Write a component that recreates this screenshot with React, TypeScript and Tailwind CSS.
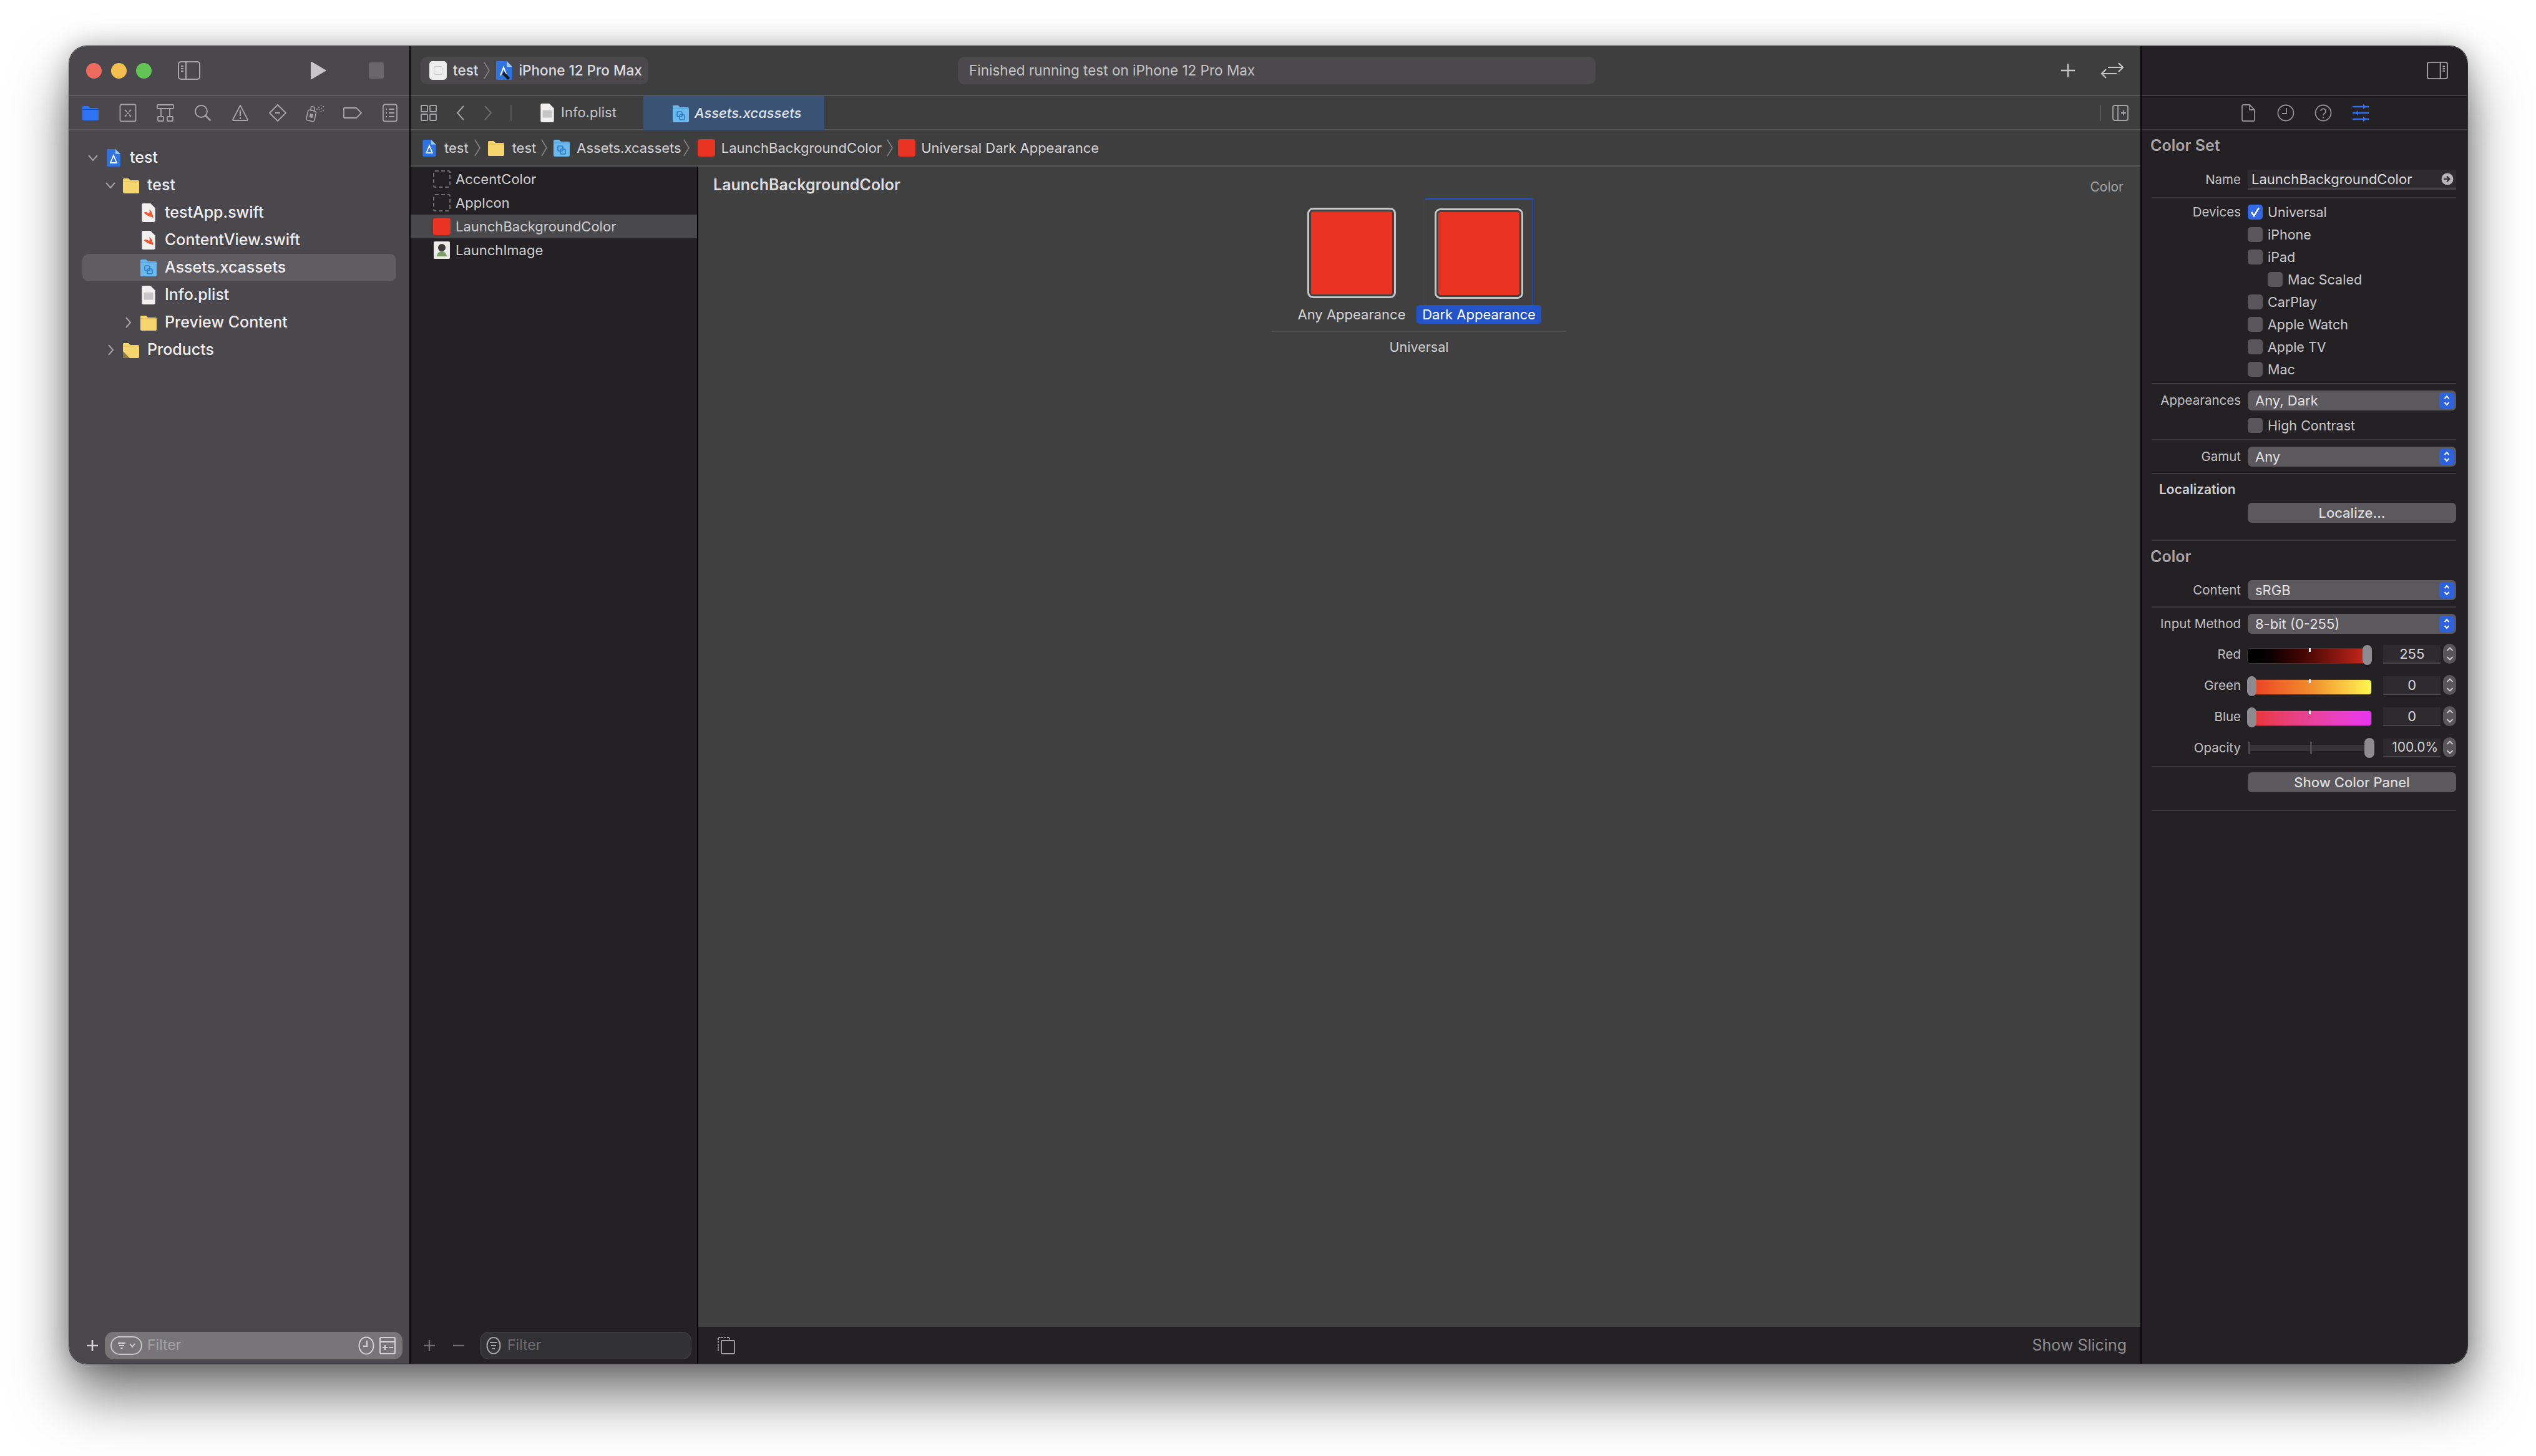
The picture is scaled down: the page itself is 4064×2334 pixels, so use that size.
import React from "react";

const ui = { fontFamily: "Inter, 'Liberation Sans', sans-serif" };

const Chevron = ({ className = "" }: { className?: string }) => (
  <svg viewBox="0 0 12 30" className={`w-[12px] h-[30px] shrink-0 ${className}`} fill="none" stroke="#858386" strokeWidth="1.6">
    <path d="M2 2l8 13-8 13" />
  </svg>
);

const Disclosure = ({ open }: { open: boolean }) => (
  <svg viewBox="0 0 20 20" className="w-[20px] h-[20px]" fill="none" stroke="#a5a3a7" strokeWidth="2">
    {open ? <path d="M3 6l7 8 7-8" /> : <path d="M7 2l7 8-7 8" />}
  </svg>
);

const FolderIcon = ({ size = "w-[28px] h-[28px]", badge = false }: { size?: string; badge?: boolean }) => (
  <svg viewBox="0 0 28 28" className={size}>
    <path d="M1 5a2 2 0 012-2h7l3 3h12a2 2 0 012 2v17a2 2 0 01-2 2H3a2 2 0 01-2-2z" fill="#f6d56f" />
    <path d="M1 8h26" stroke="#e0ba4e" strokeWidth="1" />
    {badge && <path d="M1 16l11 11H3a2 2 0 01-2-2z" fill="#8c7a3c" />}
  </svg>
);

const ProjectIcon = ({ size = "w-[24px] h-[30px]" }: { size?: string }) => (
  <svg viewBox="0 0 24 30" className={size}>
    <path d="M1 3a2 2 0 012-2h12l8 8v18a2 2 0 01-2 2H3a2 2 0 01-2-2z" fill="#2f73e0" />
    <path d="M15 1l8 8h-8z" fill="#9cc7f5" />
    <path d="M7 23l5-12 5 12M6 23h12" stroke="#fff" strokeWidth="1.8" fill="none" />
  </svg>
);

const SwiftIcon = () => (
  <svg viewBox="0 0 24 30" className="w-[26px] h-[32px]">
    <path d="M2 3a2 2 0 012-2h11l7 7v19a2 2 0 01-2 2H4a2 2 0 01-2-2z" fill="#f2f1f0" />
    <path d="M5 15c4 4 8 6 11 6 1 0 2 1 3 2 0-2 0-4-1-5 0-3-2-6-5-8 1 3 1 5 0 6-2-1-5-3-8-1z" fill="#ee5b36" />
  </svg>
);

const PlistIcon = ({ size = "w-[26px] h-[32px]" }: { size?: string }) => (
  <svg viewBox="0 0 24 30" className={size}>
    <path d="M2 3a2 2 0 012-2h11l7 7v19a2 2 0 01-2 2H4a2 2 0 01-2-2z" fill="#f2f1f0" />
    <rect x="5" y="11" width="14" height="11" rx="1" fill="#c6c5c7" />
  </svg>
);

const AssetsIcon = ({ size = "w-[28px] h-[30px]" }: { size?: string }) => (
  <svg viewBox="0 0 28 30" className={size}>
    <path d="M1 4a2 2 0 012-2h7l3 3h12a2 2 0 012 2v20a2 2 0 01-2 2H3a2 2 0 01-2-2z" fill="#6bb9ef" />
    <path d="M1 7h26" stroke="#4a9bd8" strokeWidth="1" />
    <rect x="8" y="12" width="8" height="8" rx="1.5" fill="none" stroke="#2c79c4" strokeWidth="1.6" />
    <rect x="12" y="17" width="8" height="8" rx="1.5" fill="none" stroke="#2c79c4" strokeWidth="1.6" />
  </svg>
);

const Red = ({ className = "w-[28px] h-[28px]" }: { className?: string }) => (
  <div className={`bg-[#e93323] rounded-[4px] shrink-0 ${className}`} />
);

const navIcon = "w-[30px] h-[30px]";
const NavIcons = [
  <svg viewBox="0 0 30 30" className={navIcon} key="a">
    <path d="M2 6a2 2 0 012-2h7l3 3h12a2 2 0 012 2v16a2 2 0 01-2 2H4a2 2 0 01-2-2z" fill="#2f74f5" />
    <path d="M2 9.5h26" stroke="#48464a" strokeWidth="1" />
  </svg>,
  <svg viewBox="0 0 30 30" className={navIcon} fill="none" stroke="#a5a3a7" strokeWidth="1.8" key="b">
    <rect x="2.5" y="1.5" width="25" height="27" rx="2" />
    <path d="M10 10l3 3M20 10l-3 3M10 21l3-3M20 21l-3-3" />
    <circle cx="15" cy="15.5" r="1.6" fill="#a5a3a7" stroke="none" />
  </svg>,
  <svg viewBox="0 0 30 30" className={navIcon} fill="none" stroke="#a5a3a7" strokeWidth="1.8" key="c">
    <rect x="2" y="2" width="26" height="6" rx="1" />
    <path d="M8 8v12M22 8v12" />
    <rect x="3" y="21" width="9" height="7" rx="1" />
    <rect x="18" y="21" width="9" height="7" rx="1" />
  </svg>,
  <svg viewBox="0 0 30 30" className={navIcon} fill="none" stroke="#a5a3a7" strokeWidth="2" key="d">
    <circle cx="12.5" cy="12.5" r="9.5" />
    <path d="M19.5 19.5l8 8" strokeWidth="2.6" />
  </svg>,
  <svg viewBox="0 0 30 30" className={navIcon} fill="none" stroke="#a5a3a7" strokeWidth="1.8" key="e">
    <path d="M15 3L3 26a1 1 0 001 1h22a1 1 0 001-1z" strokeLinejoin="round" />
    <path d="M15 11v9" strokeWidth="2.2" />
    <circle cx="15" cy="23.5" r="1.3" fill="#a5a3a7" stroke="none" />
  </svg>,
  <svg viewBox="0 0 30 30" className={navIcon} fill="none" stroke="#a5a3a7" strokeWidth="1.8" key="f">
    <path d="M15 2l13 13-13 13L2 15z" strokeLinejoin="round" />
    <path d="M11 15h8" strokeWidth="2.2" />
  </svg>,
  <svg viewBox="0 0 30 30" className={navIcon} fill="#a5a3a7" stroke="#a5a3a7" strokeWidth="1.6" key="g">
    <g transform="rotate(12 9 18)" >
      <rect x="2.5" y="11" width="13" height="17" rx="2.5" fill="none" />
      <rect x="6" y="5" width="6" height="6" rx="1" fill="none" />
      <rect x="6.5" y="16.5" width="5" height="6" stroke="none" />
    </g>
    <g stroke="none">
      <circle cx="18" cy="9" r="1" /><circle cx="21" cy="6" r="1" /><circle cx="24.500" cy="3" r="1" />
      <circle cx="21.500" cy="10" r="1" /><circle cx="25" cy="7.500" r="1" /><circle cx="28.500" cy="5" r="1" />
      <circle cx="24.500" cy="13" r="1" /><circle cx="28" cy="11" r="1" />
    </g>
  </svg>,
  <svg viewBox="0 0 30 30" className={navIcon} fill="none" stroke="#a5a3a7" strokeWidth="1.8" key="h">
    <path d="M1 8a1 1 0 011-1h19l8 8-8 8H2a1 1 0 01-1-1z" strokeLinejoin="round" />
  </svg>,
  <svg viewBox="0 0 30 30" className={navIcon} fill="none" stroke="#a5a3a7" strokeWidth="1.8" key="i">
    <rect x="4" y="1.5" width="22" height="27" rx="3" />
    <path d="M8 9h2M13 9h9M8 15h2M13 15h9M8 21h2M13 21h9" />
  </svg>,
];

const tree = [
  { name: "test", pad: "pl-[7px]", open: true, icon: <ProjectIcon /> },
  { name: "test", pad: "pl-[35px]", open: true, icon: <FolderIcon /> },
  { name: "testApp.swift", pad: "pl-[63px]", icon: <SwiftIcon /> },
  { name: "ContentView.swift", pad: "pl-[63px]", icon: <SwiftIcon /> },
  { name: "Assets.xcassets", pad: "pl-[63px]", icon: <AssetsIcon />, selected: true },
  { name: "Info.plist", pad: "pl-[63px]", icon: <PlistIcon /> },
  { name: "Preview Content", pad: "pl-[63px]", open: false, icon: <FolderIcon /> },
  { name: "Products", pad: "pl-[35px]", open: false, icon: <FolderIcon badge /> },
];

const Divider = ({ className = "" }: { className?: string }) => <div className={`h-[2px] bg-[#3d3b3f] ${className}`} />;

const Label = ({ children }: { children?: React.ReactNode }) => (
  <div className="w-[143px] mr-[11px] text-right text-[20.500px] text-[#c2c1c3] shrink-0 whitespace-nowrap">{children}</div>
);

const Popup = ({ label, value }: { label: string; value: string }) => (
  <div className="flex items-center h-[32px]">
    <Label>{label}</Label>
    <div className="flex-1 h-[32px] rounded-[7px] bg-[#5b595d] flex items-center justify-between pl-[12px] pr-[3px] text-[22px] text-[#e2e1e3]">
      <span>{value}</span>
      <div className="w-[24px] h-[27px] rounded-[6px] bg-[#2d62dc] flex items-center justify-center">
        <svg viewBox="0 0 12 20" className="w-[12px] h-[20px]" fill="none" stroke="#fff" strokeWidth="2">
          <path d="M2.5 7L6 3l3.500 4M2.500 13L6 17l3.500-4" />
        </svg>
      </div>
    </div>
  </div>
);

const Check = ({ label, checked, indent }: { label: string; checked?: boolean; indent?: boolean }) => (
  <div className={`flex items-center h-[36px] ${indent ? "pl-[32px]" : ""}`}>
    <div className={`w-[24px] h-[24px] rounded-[5px] flex items-center justify-center ${checked ? "bg-[#3369e7]" : "bg-[#58565a]"}`}>
      {checked && (
        <svg viewBox="0 0 20 20" className="w-[20px] h-[20px]" fill="none" stroke="#fff" strokeWidth="2.6">
          <path d="M4 10l4 6 8-13" />
        </svg>
      )}
    </div>
    <span className="ml-[8px] text-[21.500px] text-[#c8c7c9]">{label}</span>
  </div>
);

const WideButton = ({ label }: { label: string }) => (
  <div className="ml-[154px] h-[32px] rounded-[7px] bg-[#5b595d] flex items-center justify-center text-[22px] font-medium text-[#dcdbdd]">{label}</div>
);

const Stepper = () => (
  <div className="ml-[4px] w-[21px] h-[32px] -mt-[3px] rounded-full bg-[#58565a] flex items-center justify-center">
    <svg viewBox="0 0 14 26" className="w-[14px] h-[26px]" fill="none" stroke="#d0cfd1" strokeWidth="1.8">
      <path d="M2.5 8L7 3.5 11.5 8M2.5 18L7 22.5 11.5 18" />
    </svg>
  </div>
);

const SliderRow = ({ label, value, track, at }: { label: string; value: string; track: string; at: "start" | "end" }) => (
  <div className="flex items-center h-[50px]">
    <Label>{label}</Label>
    <div className="relative w-[201px] h-[25px] -ml-[1px] mt-[5px]">
      <div className={`h-full rounded-[5px] border border-[#3a383c] ${track}`} />
      <div className="absolute left-[99px] top-[0px] w-[3px] h-[6px] bg-[#f0f0f0]" />
      <div className={`absolute -top-[5px] w-[15px] h-[32px] rounded-full bg-[#8d8b8f] ${at === "end" ? "right-[0px]" : "left-[0px]"}`} />
    </div>
    <div className="ml-[18px] w-[92px] h-[30px] bg-[#2d2b2f] border-b-2 border-[#48464a] flex items-center justify-center text-[22px] text-[#d6d5d7]">{value}</div>
    <Stepper />
  </div>
);

export default function App() {
  return (
    <div className="w-[4064px] h-[2334px] bg-white pt-[74px] pl-[111px] overflow-hidden" style={ui}>
      <div className="w-[3843px] h-[2112px] rounded-[28px] overflow-hidden flex shadow-[0_0_0_1px_#2e2d2f,0_50px_90px_rgba(0,0,0,0.55),0_0_40px_rgba(0,0,0,0.25)]">
        {/* navigator */}
        <div className="w-[547px] h-full bg-[#4a484c] border-r-2 border-black flex flex-col shrink-0">
          <div className="h-[80px] border-b-2 border-[#5e5c60] flex items-center pl-[27px] shrink-0">
            <div className="w-[25px] h-[25px] rounded-full bg-[#ec6a5e]" />
            <div className="w-[25px] h-[25px] rounded-full bg-[#f4bf4f] ml-[15px]" />
            <div className="w-[25px] h-[25px] rounded-full bg-[#61c454] ml-[15px]" />
            <svg viewBox="0 0 36 30" className="w-[36px] h-[30px] ml-[42px]" fill="none" stroke="#a9a7ab" strokeWidth="2">
              <rect x="1" y="1" width="34" height="28" rx="4" />
              <path d="M13 1v28M5 8h4M5 12h4M5 16h4" />
            </svg>
            <svg viewBox="0 0 26 30" className="w-[26px] h-[30px] ml-[176px]">
              <path d="M1 2a1 1 0 011.5-1l22 13a1 1 0 010 2l-22 13a1 1 0 01-1.5-1z" fill="#c7c5c9" />
            </svg>
            <div className="w-[24px] h-[26px] rounded-[3px] bg-[#69676b] ml-[68px]" />
          </div>
          <div className="h-[55px] border-b-2 border-[#5e5c60] flex items-center pl-[4px] shrink-0">
            {NavIcons.map((icon, i) => (
              <div key={i} className="w-[60px] flex justify-center">{icon}</div>
            ))}
          </div>
          <div className="flex-1 pt-[22px]">
            {tree.map((row, i) => (
              <div key={i} className={`h-[44px] mx-[21px] rounded-[10px] flex items-center ${row.pad} ${row.selected ? "bg-[#5f5d61]" : ""}`}>
                <div className="w-[20px] flex justify-center">
                  {row.open !== undefined && <Disclosure open={row.open} />}
                </div>
                <div className="w-[46px] flex justify-center">{row.icon}</div>
                <span className="ml-[3px] text-[25px] font-medium text-[#efeef0] whitespace-nowrap">{row.name}</span>
              </div>
            ))}
          </div>
          <div className="h-[59px] flex items-center shrink-0 pl-[27px]">
            <svg viewBox="0 0 20 20" className="w-[20px] h-[20px]" fill="none" stroke="#d3d2d4" strokeWidth="2.6"><path d="M10 1v18M1 10h18" /></svg>
            <div className="ml-[10px] w-[477px] h-[44px] rounded-[14px] bg-[#777578] flex items-center pl-[9px] pr-[11px]">
              <div className="w-[51px] h-[30px] rounded-full border-2 border-[#c5c4c6] flex items-center justify-center gap-[5px]">
                <svg viewBox="0 0 14 12" className="w-[14px] h-[12px]" fill="none" stroke="#d3d2d4" strokeWidth="2"><path d="M1 2h12M3 6h8M5.5 10h3" /></svg>
                <svg viewBox="0 0 10 8" className="w-[10px] h-[8px]" fill="none" stroke="#d3d2d4" strokeWidth="1.8"><path d="M1 1l4 5 4-5" /></svg>
              </div>
              <span className="ml-[8px] text-[23px] text-[#a5a3a7] flex-1">Filter</span>
              <svg viewBox="0 0 26 30" className="w-[26px] h-[30px]" fill="none" stroke="#d3d2d4" strokeWidth="2">
                <ellipse cx="13" cy="15" rx="11.5" ry="13.5" />
                <path d="M14 7v9H8" />
              </svg>
              <svg viewBox="0 0 26 30" className="w-[26px] h-[30px] ml-[8px]" fill="none" stroke="#d3d2d4" strokeWidth="2">
                <rect x="1" y="2" width="24" height="26" rx="2" />
                <path d="M1 9h24M5 18h8M9 14v8M16 18h6" />
              </svg>
            </div>
          </div>
        </div>

        {/* middle */}
        <div className="w-[2774px] h-full border-r-2 border-black flex flex-col shrink-0">
          <div className="h-[80px] bg-[#3f3e3f] border-b-2 border-[#565557] flex items-center pl-[16px] shrink-0">
            <div className="w-[365px] h-[44px] rounded-[10px] bg-[#4a484b] flex items-center pl-[14px] text-[22.500px] text-[#dedddf] font-medium">
              <div className="w-[28px] h-[30px] rounded-[5px] bg-[#eeeded] flex items-center justify-center">
                <div className="w-[14px] h-[14px] rounded-[3px] border border-[#c8c8c8]" />
              </div>
              <span className="ml-[10px]">test</span>
              <Chevron className="ml-[8px] mr-[8px]" />
              <svg viewBox="0 0 28 32" className="w-[28px] h-[32px]">
                <path d="M1 3a2 2 0 012-2h15l9 9v19a2 2 0 01-2 2H3a2 2 0 01-2-2z" fill="#2f73e0" />
                <path d="M18 1l9 9h-9z" fill="#9cc7f5" />
                <path d="M8 24l5-13 5 13" stroke="#fff" strokeWidth="2" fill="none" />
                <path d="M14 18l9 10-3 3-9-9z" fill="#161616" />
              </svg>
              <span className="ml-[9px] whitespace-nowrap">iPhone 12 Pro Max</span>
            </div>
            <div className="ml-[496px] w-[1022px] h-[44px] rounded-[10px] bg-[#4b494b] flex items-center pl-[18px] text-[22.500px] text-[#c6c5c7]">Finished running test on iPhone 12 Pro Max</div>
            <svg viewBox="0 0 24 24" className="w-[24px] h-[24px] ml-[745px]" fill="none" stroke="#c5c4c6" strokeWidth="2.4"><path d="M12 1v22M1 12h22" /></svg>
            <svg viewBox="0 0 38 28" className="w-[38px] h-[28px] ml-[40px]" fill="none" stroke="#c5c4c6" strokeWidth="2.2">
              <path d="M12 9h24M29 2l7 7-7 7M26 19H2M9 12l-7 7 7 7" />
            </svg>
          </div>
          <div className="h-[55px] bg-[#3f3e3f] border-b-2 border-[#565557] flex items-center pl-[16px] shrink-0">
            <svg viewBox="0 0 26 26" className="w-[26px] h-[26px]" fill="none" stroke="#a5a3a7" strokeWidth="1.8">
              <rect x="1" y="1" width="10" height="10" rx="1" /><rect x="15" y="1" width="10" height="10" rx="1" />
              <rect x="1" y="15" width="10" height="10" rx="1" /><rect x="15" y="15" width="10" height="10" rx="1" />
            </svg>
            <svg viewBox="0 0 14 26" className="w-[14px] h-[26px] ml-[31px]" fill="none" stroke="#a5a3a7" strokeWidth="2"><path d="M12 2L2 13l10 11" /></svg>
            <svg viewBox="0 0 14 26" className="w-[14px] h-[26px] ml-[30px]" fill="none" stroke="#6d6b6f" strokeWidth="2"><path d="M2 2l10 11L2 24" /></svg>
            <div className="w-[2px] h-[26px] bg-[#565557] ml-[29px]" />
            <div className="ml-[44px]"><PlistIcon size="w-[26px] h-[32px]" /></div>
            <span className="ml-[9px] text-[22px] text-[#c6c5c7]">Info.plist</span>
            <div className="ml-[43px] w-[290px] h-[55px] -mb-[2px] bg-[#3a5274] flex items-center pl-[46px]">
              <AssetsIcon size="w-[28px] h-[32px]" />
              <span className="ml-[8px] text-[22px] italic font-medium text-[#dfe4ec]">Assets.xcassets</span>
            </div>
            <div className="flex-1" />
            <div className="w-[2px] h-[26px] bg-[#565557]" />
            <svg viewBox="0 0 26 26" className="w-[26px] h-[26px] ml-[18px] mr-[19px]" fill="none" stroke="#a5a3a7" strokeWidth="1.8">
              <rect x="1" y="1" width="24" height="24" rx="3" /><path d="M9 1v24M14 13h8M18 9v8" />
            </svg>
          </div>
          <div className="h-[58px] bg-[#3f3e3f] border-b-2 border-[#565557] flex items-center pl-[18px] shrink-0 text-[22px] text-[#d4d3d5]">
            <ProjectIcon size="w-[24px] h-[29px]" />
            <span className="ml-[12px]">test</span>
            <Chevron className="ml-[8px] mr-[10px]" />
            <FolderIcon />
            <span className="ml-[12px]">test</span>
            <Chevron className="ml-[7px] mr-[8px]" />
            <AssetsIcon />
            <span className="ml-[10px]">Assets.xcassets</span>
            <Chevron className="ml-[2px] mr-[12px]" />
            <Red />
            <span className="ml-[10px]">LaunchBackgroundColor</span>
            <Chevron className="ml-[7px] mr-[7px]" />
            <Red />
            <span className="ml-[9px]">Universal Dark Appearance</span>
          </div>
          <div className="flex-1 flex min-h-0">
            <div className="w-[461px] h-full bg-[#242125] border-r-2 border-black flex flex-col shrink-0">
              <div className="flex-1 pt-[1px]">
                {["AccentColor", "AppIcon", "LaunchBackgroundColor", "LaunchImage"].map((name, i) => (
                  <div key={name} className={`h-[38px] flex items-center pl-[36px] text-[22px] text-[#cfced0] ${i === 2 ? "bg-[#48474a]" : ""}`}>
                    {i < 2 && <div className="w-[28px] h-[28px] rounded-[3px] border-2 border-dashed border-[#6e6c70]" />}
                    {i === 2 && <Red />}
                    {i === 3 && (
                      <svg viewBox="0 0 26 28" className="w-[26px] h-[28px] mx-[1px]">
                        <rect width="26" height="28" rx="2" fill="#ecebe8" />
                        <circle cx="13" cy="10" r="6" fill="#3c3a38" />
                        <path d="M5 24c1-6 4-8 8-8s7 2 8 8z" fill="#7f9c6a" />
                      </svg>
                    )}
                    <span className="ml-[8px]">{name}</span>
                  </div>
                ))}
              </div>
              <div className="h-[59px] flex items-center pl-[20px] shrink-0">
                <svg viewBox="0 0 20 20" className="w-[20px] h-[20px]" fill="none" stroke="#6e6c70" strokeWidth="2.4"><path d="M10 1v18M1 10h18" /></svg>
                <svg viewBox="0 0 20 20" className="w-[20px] h-[20px] ml-[27px]" fill="none" stroke="#6e6c70" strokeWidth="2.4"><path d="M1 10h18" /></svg>
                <div className="ml-[24px] w-[339px] h-[44px] rounded-[14px] bg-[#323133] border border-[#454446] flex items-center pl-[9px]">
                  <svg viewBox="0 0 24 30" className="w-[24px] h-[30px]" fill="none" stroke="#a5a3a7" strokeWidth="2">
                    <ellipse cx="12" cy="15" rx="10.5" ry="13" />
                    <path d="M6 10h12M8 15h8M10 20h4" />
                  </svg>
                  <span className="ml-[10px] text-[23px] text-[#6e6c70]">Filter</span>
                </div>
              </div>
            </div>
            <div className="flex-1 h-full flex flex-col min-w-0">
              <div className="flex-1 bg-[#404040]">
                <div className="h-[50px] pt-[10px] flex items-center justify-between pl-[24px] pr-[27px]">
                  <span className="text-[25px] font-semibold text-[#dedddf]">LaunchBackgroundColor</span>
                  <span className="text-[21px] text-[#a5a4a6] mt-[5px]">Color</span>
                </div>
                <div className="ml-[919px] w-[472px] mt-[1px]">
                  <div className="flex pl-[26px]">
                    <div className="w-[204px] flex flex-col items-center">
                      <div className="h-[171px] pt-[15px]">
                        <div className="w-[142px] h-[145px] rounded-[9px] border-[3px] border-[#c6c6c6] p-[3px]">
                          <div className="w-full h-full rounded-[4px] bg-[#e93323]" />
                        </div>
                      </div>
                      <div className="h-[30px] flex items-center text-[22px] text-[#d4d3d5] whitespace-nowrap">Any Appearance</div>
                    </div>
                    <div className="w-[204px] flex flex-col items-center">
                      <div className="h-[171px] w-[174px] pt-[14px] border-x border-t-2 border-[#2253c9] rounded-t-[3px] flex justify-center">
                        <div className="w-[142px] h-[145px] rounded-[9px] border-[3px] border-[#c6c6c6] p-[3px]">
                          <div className="w-full h-full rounded-[4px] bg-[#e93323]" />
                        </div>
                      </div>
                      <div className="h-[30px] w-[200px] rounded-[5px] bg-[#2253c9] flex items-center justify-center text-[22px] text-white whitespace-nowrap">Dark Appearance</div>
                    </div>
                  </div>
                  <div className="h-[2px] bg-[#4f4f4f] mt-[11px]" />
                  <div className="h-[30px] mt-[9px] flex items-center justify-center text-[21.500px] text-[#cfced0]">Universal</div>
                </div>
              </div>
              <div className="h-[59px] bg-[#242125] flex items-center justify-between pl-[31px] pr-[22px] shrink-0">
                <svg viewBox="0 0 28 28" className="w-[28px] h-[28px]" fill="none" stroke="#a5a3a7" strokeWidth="1.8">
                  <path d="M1 23V1h18v5" strokeDasharray="3 1.5" />
                  <rect x="6" y="6" width="21" height="21" rx="1.5" fill="#242125" />
                </svg>
                <span className="text-[25px] text-[#8f8e90]">Show Slicing</span>
              </div>
            </div>
          </div>
        </div>

        {/* inspector */}
        <div className="flex-1 h-full bg-[#242125] flex flex-col min-w-0">
          <div className="h-[80px] border-b-2 border-[#3d3b3f] flex items-center justify-end pr-[30px] shrink-0">
            <svg viewBox="0 0 36 30" className="w-[36px] h-[28px]" fill="none" stroke="#a9a7ab" strokeWidth="2">
              <rect x="1" y="1" width="34" height="28" rx="3" />
              <path d="M23 1v28M27 8h4M27 12h4M27 16h4" />
            </svg>
          </div>
          <div className="h-[55px] border-b-2 border-[#3d3b3f] flex items-center pl-[141px] shrink-0">
            <div className="w-[60px] flex justify-center">
              <svg viewBox="0 0 22 28" className="w-[22px] h-[28px]" fill="none" stroke="#918f93" strokeWidth="1.8">
                <path d="M1 3a2 2 0 012-2h10l8 8v16a2 2 0 01-2 2H3a2 2 0 01-2-2zM13 1v8h8" />
              </svg>
            </div>
            <div className="w-[60px] flex justify-center">
              <svg viewBox="0 0 28 28" className="w-[28px] h-[28px]" fill="none" stroke="#918f93" strokeWidth="1.8">
                <circle cx="14" cy="14" r="12.5" /><path d="M15 6v9H8" />
              </svg>
            </div>
            <div className="w-[60px] flex justify-center">
              <svg viewBox="0 0 28 28" className="w-[28px] h-[28px]" fill="none" stroke="#918f93" strokeWidth="1.8">
                <circle cx="14" cy="14" r="12.5" />
                <path d="M10 11a4 4 0 117 3c-2 1.500-3 2-3 4" />
                <circle cx="14" cy="21.500" r="1.200" fill="#918f93" stroke="none" />
              </svg>
            </div>
            <div className="w-[60px] flex justify-center">
              <svg viewBox="0 0 28 28" className="w-[28px] h-[28px]" fill="#2f6fed" stroke="#2f6fed" strokeWidth="2.4">
                <path d="M1 4h26M1 14h26M1 24h26" />
                <path d="M18 0l5 4-5 4zM10 10l-5 4 5 4zM18 20l5 4-5 4z" stroke="none" />
              </svg>
            </div>
          </div>
          <div className="pl-[16px] pr-[18px]">
            <div className="h-[49px] flex items-center -ml-[2px] text-[25px] font-semibold text-[#a7a5a9]">Color Set</div>
            <div className="flex items-center h-[32px] mt-[14px]">
              <Label>Name</Label>
              <div className="flex-1 h-[32px] bg-[#2d2b2f] border-b-2 border-[#4a484c] flex items-center justify-between pl-[6px] pr-[4px] text-[22px] text-[#dcdbdd]">
                <span>LaunchBackgroundColor</span>
                <svg viewBox="0 0 20 20" className="w-[20px] h-[20px]"><circle cx="10" cy="10" r="9.500" fill="#b5b4b6" /><path d="M4 10h9M9 5.500L13.500 10 9 14.500" fill="none" stroke="#2d2b2f" strokeWidth="2" /></svg>
              </div>
            </div>
            <Divider className="mt-[12px]" />
            <div className="flex mt-[4px]">
              <div className="h-[36px] flex items-center"><Label>Devices</Label></div>
              <div className="flex-1">
                <Check label="Universal" checked />
                <Check label="iPhone" />
                <Check label="iPad" />
                <Check label="Mac Scaled" indent />
                <Check label="CarPlay" />
                <Check label="Apple Watch" />
                <Check label="Apple TV" />
                <Check label="Mac" />
              </div>
            </div>
            <Divider className="mt-[4px]" />
            <div className="mt-[10px]"><Popup label="Appearances" value="Any, Dark" /></div>
            <div className="mt-[6px] pl-[154px]"><Check label="High Contrast" /></div>
            <Divider className="mt-[4px]" />
            <div className="mt-[10px]"><Popup label="Gamut" value="Any" /></div>
            <Divider className="mt-[10px]" />
            <div className="mt-[7px] h-[36px] flex items-center pl-[12px] text-[21px] font-semibold text-[#d0cfd1]">Localization</div>
            <div className="mt-[3px]"><WideButton label="Localize..." /></div>
            <Divider className="mt-[27px]" />
            <div className="mt-[8px] h-[36px] flex items-center -ml-[2px] text-[25px] font-semibold text-[#a7a5a9]">Color</div>
            <div className="mt-[19px]"><Popup label="Content" value="sRGB" /></div>
            <Divider className="mt-[10px]" />
            <div className="mt-[10px]"><Popup label="Input Method" value="8-bit (0-255)" /></div>
            <div className="mt-[8px]">
              <SliderRow label="Red" value="255" at="end" track="bg-linear-to-r from-black to-[#d42a1f]" />
              <SliderRow label="Green" value="0" at="start" track="bg-linear-to-r from-[#ea3323] via-[#f08a2e] to-[#fdf651]" />
              <SliderRow label="Blue" value="0" at="start" track="bg-linear-to-r from-[#ea3323] to-[#ea33f0]" />
              <div className="flex items-center h-[50px]">
                <Label>Opacity</Label>
                <div className="relative w-[201px] h-[10px] ml-[1px] bg-[#363438]">
                  <div className="absolute left-[0px] -top-[5px] w-[3px] h-[20px] bg-[#4b494d]" />
                  <div className="absolute left-[99px] -top-[5px] w-[3px] h-[20px] bg-[#4b494d]" />
                  <div className="absolute right-[-2px] -top-[11px] w-[16px] h-[32px] rounded-full bg-[#8d8b8f]" />
                </div>
                <div className="ml-[16px] w-[92px] h-[30px] bg-[#2d2b2f] border-b-2 border-[#48464a] flex items-center justify-end pr-[4px] text-[21px] text-[#d6d5d7]">100.0%</div>
                <Stepper />
              </div>
            </div>
            <Divider className="mt-[4px]" />
            <div className="mt-[8px]"><WideButton label="Show Color Panel" /></div>
            <Divider className="mt-[28px]" />
          </div>
        </div>
      </div>
    </div>
  );
}
